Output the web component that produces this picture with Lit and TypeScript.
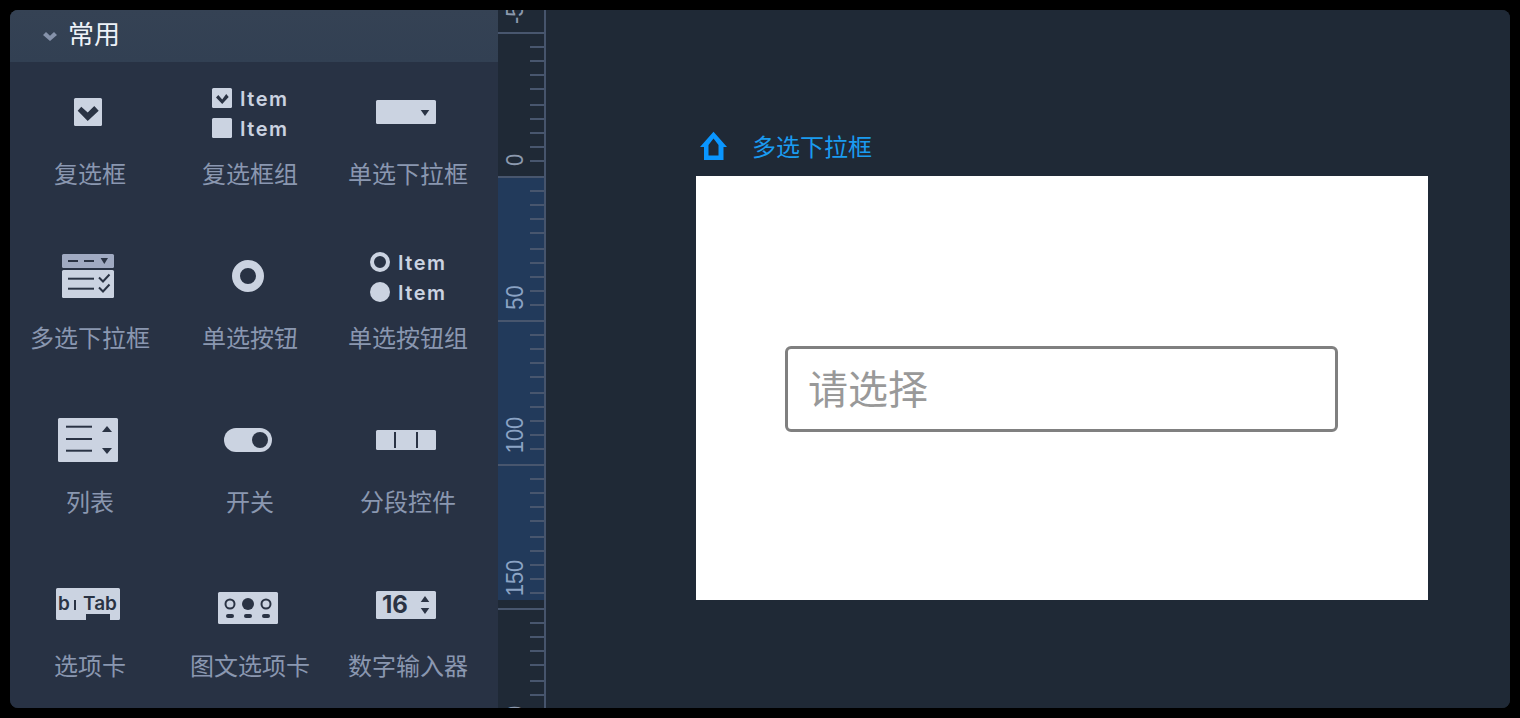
import { LitElement, html, css, svg } from "lit";
import { customElement } from "lit/decorators.js";

const tri = (cx: number, y: number, w: number, h: number, up = false) =>
  svg`<polygon class="d" points=${up ? `${cx - w / 2},${y + h} ${cx + w / 2},${y + h} ${cx},${y}` : `${cx - w / 2},${y} ${cx + w / 2},${y} ${cx},${y + h}`}></polygon>`;

const box = (x: number, y: number, w: number, h: number) =>
  svg`<rect class="f" x=${x} y=${y} width=${w} height=${h} rx="1.5"></rect>`;

const dl = (x1: number, y1: number, x2: number, y2: number) =>
  svg`<line class="l" x1=${x1} y1=${y1} x2=${x2} y2=${y2}></line>`;

// Each icon is drawn around (0,0): the column's centre and the row's icon centre.
const items = [
  {
    label: "复选框",
    icon: svg`${box(-16, -14, 28, 28)}
      <polygon class="d" points="-12.3,-1.3 -8.7,-5.3 -2.3,0.5 4.3,-6 8.7,-1.3 -2.3,9"></polygon>`,
  },
  {
    label: "复选框组",
    icon: svg`${box(-38, -24, 20, 20)}
      <polygon class="d" points="-34,-14.5 -31.7,-17 -27.8,-12.5 -23.8,-18 -21.3,-15 -27.8,-8"></polygon>
      <text class="item" x="-10" y="-6">Item</text>
      ${box(-38, 6, 20, 20)}
      <text class="item" x="-10" y="24">Item</text>`,
  },
  {
    label: "单选下拉框",
    icon: svg`${box(-32, -12, 60, 24)}${tri(17, -2, 8.6, 6)}`,
  },
  {
    label: "多选下拉框",
    icon: svg`<rect class="g" x="-28" y="-22" width="52" height="14" rx="1.5"></rect>
      ${dl(-22, -15, -12, -15)}${dl(-6, -15, 4, -15)}${tri(14.3, -18, 7.4, 6)}
      ${box(-28, -6, 52, 28)}
      ${dl(-22, 2.7, 4, 2.7)}${dl(-22, 12.7, 4, 12.7)}
      <polyline class="l" points="9,1.5 13,5.5 19.5,-1.5"></polyline>
      <polyline class="l" points="9,11.5 13,15.5 19.5,8.5"></polyline>`,
  },
  {
    label: "单选按钮",
    icon: svg`<circle class="ring8" cx="-2" cy="0" r="12"></circle>`,
  },
  {
    label: "单选按钮组",
    icon: svg`<circle class="ring4" cx="-28" cy="-14" r="8"></circle>
      <text class="item" x="-10" y="-6">Item</text>
      <circle class="f" cx="-28" cy="16" r="10"></circle>
      <text class="item" x="-10" y="24">Item</text>`,
  },
  {
    label: "列表",
    icon: svg`${box(-32, -22, 60, 44)}
      ${dl(-24, -13.3, 2, -13.3)}${dl(-24, -1, 2, -1)}${dl(-24, 10.7, 2, 10.7)}
      ${tri(17, -14, 10, 6, true)}${tri(17, 8, 10, 6)}`,
  },
  {
    label: "开关",
    icon: svg`<rect class="f" x="-26" y="-12" width="48" height="24" rx="12"></rect>
      <circle class="d" cx="10" cy="0" r="8"></circle>`,
  },
  {
    label: "分段控件",
    icon: svg`${box(-32, -10, 60, 20)}${dl(-13, -8, -13, 8)}${dl(9, -8, 9, 8)}`,
  },
  {
    label: "选项卡",
    icon: svg`<path class="f" d="M-32.5,-16h61a1.5,1.5 0 0 1 1.5,1.500v29a1.500,1.500 0 0 1 -1.500,1.500h-8.500v-6h-24v6h-28.500a1.500,1.500 0 0 1 -1.500,-1.500v-29a1.500,1.500 0 0 1 1.500,-1.500z"></path>
      <text class="tab" x="-32" y="6">b</text>
      ${dl(-15, -4, -15, 6)}
      <text class="tab" x="-7" y="6">Tab</text>`,
  },
  {
    label: "图文选项卡",
    icon: svg`${box(-32, -12, 60, 32)}
      <circle class="rd" cx="-20" cy="0" r="4.500"></circle>
      <circle class="d" cx="-2" cy="0" r="6"></circle>
      <circle class="rd" cx="16" cy="0" r="4.500"></circle>
      <rect class="d" x="-24" y="10" width="8" height="4" rx="2"></rect>
      <rect class="d" x="-6" y="10" width="8" height="4" rx="2"></rect>
      <rect class="d" x="12" y="10" width="8" height="4" rx="2"></rect>`,
  },
  {
    label: "数字输入器",
    icon: svg`${box(-32, -13, 60, 28)}
      <text class="num" x="-26" y="9">16</text>
      ${tri(17, -8, 8.6, 6, true)}${tri(17, 4, 8.6, 6)}`,
  },
];

const ticks = [
  47, 61, 75, 89, 105, 119, 133, 147, 161, 191, 205, 219, 233, 249, 263, 277, 291, 305, 335, 349,
  363, 377, 393, 407, 421, 435, 449, 479, 493, 507, 521, 537, 551, 565, 579, 593, 623, 637, 651,
  665, 681, 695,
];
const majors = [33, 177, 321, 465, 609];
const numbers = [
  { t: "0", y: 160, blue: false },
  { t: "50", y: 297.5, blue: true },
  { t: "100", y: 435, blue: true },
  { t: "150", y: 578, blue: true },
  { t: "200", y: 724, blue: false },
];

@customElement("app-root")
export class AppRoot extends LitElement {
  static styles = css`
    :host {
      display: block;
      width: 1520px;
      height: 718px;
      box-sizing: border-box;
      padding: 10px;
      background: #000;
      font-family: "Noto Sans CJK SC", "Liberation Sans", sans-serif;
    }
    .window {
      display: flex;
      height: 698px;
      border-radius: 8px;
      overflow: hidden;
      background: #1f2936;
    }
    .panel {
      flex: none;
      width: 488px;
      background: #283244;
    }
    .head {
      display: flex;
      align-items: center;
      gap: 11px;
      height: 52px;
      box-sizing: border-box;
      padding: 0 0 8px 33px;
      background: linear-gradient(#354254, #324053);
      color: #eef2f8;
      font-size: 26px;
    }
    .chev {
      width: 14px;
      height: 9px;
      margin-top: 9px;
    }
    .chev polygon {
      fill: #8592aa;
    }
    .grid {
      display: grid;
      grid-template-columns: 160px 160px 156px;
      row-gap: 40px;
      padding-top: 12px;
    }
    .cell {
      display: flex;
      flex-direction: column;
      align-items: center;
    }
    .cell svg {
      display: block;
      width: 120px;
      height: 76px;
    }
    .cell span {
      height: 48px;
      line-height: 46px;
      font-size: 24px;
      color: #8a97b0;
      white-space: nowrap;
    }
    .f {
      fill: #cbd3e1;
    }
    .g {
      fill: #a0aac2;
    }
    .d {
      fill: #2a3344;
    }
    .l {
      stroke: #2a3344;
      stroke-width: 2;
      fill: none;
    }
    .rd {
      fill: none;
      stroke: #2a3344;
      stroke-width: 2;
    }
    .ring8 {
      fill: none;
      stroke: #cbd3e1;
      stroke-width: 8;
    }
    .ring4 {
      fill: none;
      stroke: #cbd3e1;
      stroke-width: 4;
    }
    .item {
      fill: #cbd3e1;
      font: 600 20px "Inter", "Liberation Sans", sans-serif;
      letter-spacing: 1.5px;
    }
    .tab {
      fill: #2a3344;
      font: 600 19px "Inter", "Liberation Sans", sans-serif;
    }
    .num {
      fill: #2a3344;
      font: 700 24px "Inter", "Liberation Sans", sans-serif;
    }
    .ruler {
      flex: none;
      width: 46px;
      height: 698px;
      border-right: 2px solid #46546c;
      background: #1f2936;
    }
    .ruler svg {
      display: block;
      width: 46px;
      height: 698px;
    }
    .ruler .band {
      fill: #223a5b;
    }
    .ruler .tick {
      stroke: #48566e;
      stroke-width: 2;
    }
    .ruler text {
      font: 22px "Liberation Sans", sans-serif;
      fill: #8c99ae;
      text-anchor: middle;
    }
    .ruler text.on {
      fill: #8ba3c4;
    }
    .ruler text.start {
      text-anchor: start;
    }
    .canvas {
      flex: 1;
      padding: 120px 0 0 150px;
      background: #1f2936;
    }
    .crumb {
      display: flex;
      align-items: center;
      gap: 23px;
      height: 36px;
      margin-bottom: 10px;
      padding-left: 3px;
      color: #1a9bf0;
      font-size: 24px;
      line-height: 36px;
    }
    .crumb span {
      margin-bottom: 4px;
    }
    .crumb svg {
      width: 30px;
      height: 30px;
      margin-bottom: 4px;
    }
    .crumb path {
      fill: #0a96ff;
      fill-rule: evenodd;
    }
    .frame {
      width: 732px;
      height: 424px;
      box-sizing: border-box;
      padding: 170px 0 0 89px;
      background: #fff;
    }
    .select {
      display: flex;
      align-items: center;
      width: 553px;
      height: 86px;
      box-sizing: border-box;
      padding: 0 0 4px 20px;
      border: 3px solid #808080;
      border-radius: 6px;
      color: #999;
      font-size: 40px;
    }
  `;

  render() {
    return html`<div class="window">
      <aside class="panel">
        <div class="head">
          <svg class="chev" viewBox="0 0 14 9">
            <polygon points="0,3 3,0 7,3.800 11,0 14,3 7,9"></polygon>
          </svg>
          <span>常用</span>
        </div>
        <div class="grid">
          ${items.map(
            (i) => html`<div class="cell">
              <svg viewBox="-60 -38 120 76">${i.icon}</svg>
              <span>${i.label}</span>
            </div>`
          )}
        </div>
      </aside>
      <div class="ruler">
        <svg viewBox="498 10 46 698">
          <rect class="band" x="498" y="176" width="46" height="424"></rect>
          ${ticks.map((y) => svg`<line class="tick" x1="530" x2="544" y1=${y} y2=${y}></line>`)}
          ${majors.map((y) => svg`<line class="tick" x1="498" x2="544" y1=${y} y2=${y}></line>`)}
          <text class="start" transform="translate(523 24) rotate(-90) scale(1 1.12)">-50</text>
          ${numbers.map(
            (n) => svg`<text class=${n.blue ? "on" : ""} transform=${`translate(523 ${n.y}) rotate(-90) scale(1 1.12)`}>${n.t}</text>`
          )}
        </svg>
      </div>
      <main class="canvas">
        <div class="crumb">
          <svg viewBox="699 131 30 30">
            <path d="M713.500,131.700L727,147H723.500V160H704V147H700ZM713.500,138.500L708.500,145V155.500H718.500V145Z"></path>
          </svg>
          <span>多选下拉框</span>
        </div>
        <div class="frame">
          <div class="select">请选择</div>
        </div>
      </main>
    </div>`;
  }
}
